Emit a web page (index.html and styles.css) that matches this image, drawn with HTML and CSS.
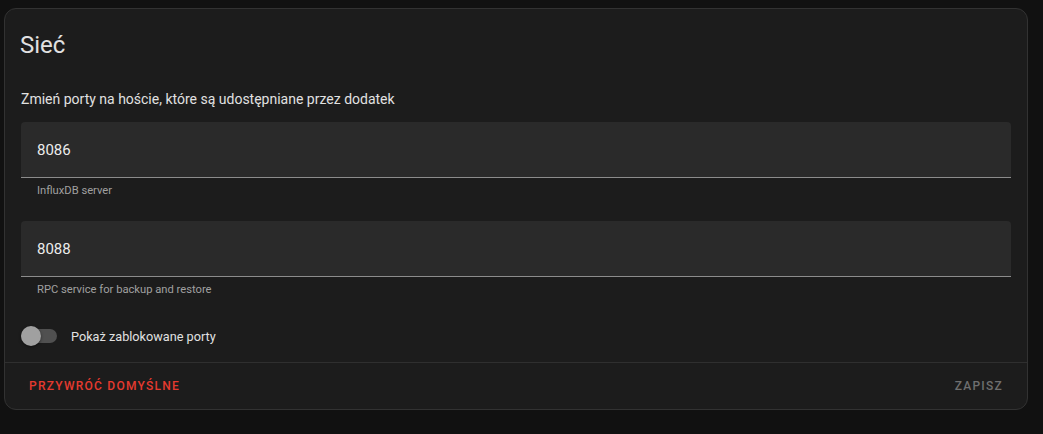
FILE: index.html
```html
<!DOCTYPE html>
<html>
<head>
	<meta charset="utf-8">
	<title>Sieć</title>
	<link rel="stylesheet" href="styles.css">
</head>
<body>
	<div class="page">
		<div class="card">
			<h1 class="card-header">Sieć</h1>
			<div class="card-content">
				<p class="description">Zmień porty na hoście, które są udostępniane przez dodatek</p>
				<div class="field">
					<div class="field-box">8086</div>
					<div class="helper">InfluxDB server</div>
				</div>
				<div class="field">
					<div class="field-box">8088</div>
					<div class="helper">RPC service for backup and restore</div>
				</div>
				<div class="toggle-row">
					<div class="switch">
						<div class="track"></div>
						<div class="knob"></div>
					</div>
					<span class="toggle-label">Pokaż zablokowane porty</span>
				</div>
			</div>
			<div class="card-actions">
				<button class="btn btn-warning">Przywróć domyślne</button>
				<button class="btn btn-disabled">Zapisz</button>
			</div>
		</div>
	</div>
</body>
</html>
```

FILE: styles.css
```css
html, body {
	margin: 0;
	height: 100%;
}
body {
	background: #111111;
	font-family: Roboto, "Noto Sans", sans-serif;
	color: #e1e1e1;
}
.page {
	padding: 8px 15px 0 4px;
}
.card {
	background: #1c1c1c;
	border: 1px solid #323232;
	border-radius: 12px;
}
.card-header {
	margin: 0;
	padding: 12px 16px 16px 15px;
	font-size: 24px;
	font-weight: 400;
	line-height: 48px;
	color: #e1e1e1;
}
.card-content {
	padding: 0 16px 13px 16px;
}
.description {
	margin: 4px 0 13px 0;
	font-size: 14px;
	line-height: 20px;
	color: #e1e1e1;
}
.field {
	margin-bottom: 23px;
}
.field-box {
	height: 55px;
	background: #2a2a2a;
	border-radius: 4px 4px 0 0;
	border-bottom: 1px solid #8c8c8c;
	padding: 0 16px;
	font-size: 15px;
	line-height: 56px;
	color: #ececec;
}
.helper {
	padding: 5px 16px 0 16px;
	font-size: 11.2px;
	line-height: 15px;
	color: #a0a0a0;
}
.toggle-row {
	display: flex;
	align-items: center;
	gap: 14px;
	height: 26px;
	margin-top: 26px;
}
.switch {
	position: relative;
	width: 36px;
	height: 20px;
}
.track {
	position: absolute;
	left: 0;
	top: 3px;
	width: 36px;
	height: 14px;
	border-radius: 7px;
	background: #505050;
}
.knob {
	position: absolute;
	left: 0;
	top: 0;
	width: 20px;
	height: 20px;
	border-radius: 50%;
	background: #a0a0a0;
	box-shadow: 0 1px 3px rgba(0, 0, 0, 0.5);
}
.toggle-label {
	font-size: 12.7px;
	color: #e1e1e1;
}
.card-actions {
	display: flex;
	justify-content: space-between;
	border-top: 1px solid #2f2f2f;
	padding: 5px 8px;
}
.btn {
	background: none;
	border: none;
	height: 36px;
	padding: 0 16px;
	font-family: Roboto, "Noto Sans", sans-serif;
	font-size: 12px;
	font-weight: 500;
	letter-spacing: 1.25px;
	text-transform: uppercase;
}
.btn-warning {
	color: #e53a2f;
}
.btn-disabled {
	color: #6f6f6f;
}
```
